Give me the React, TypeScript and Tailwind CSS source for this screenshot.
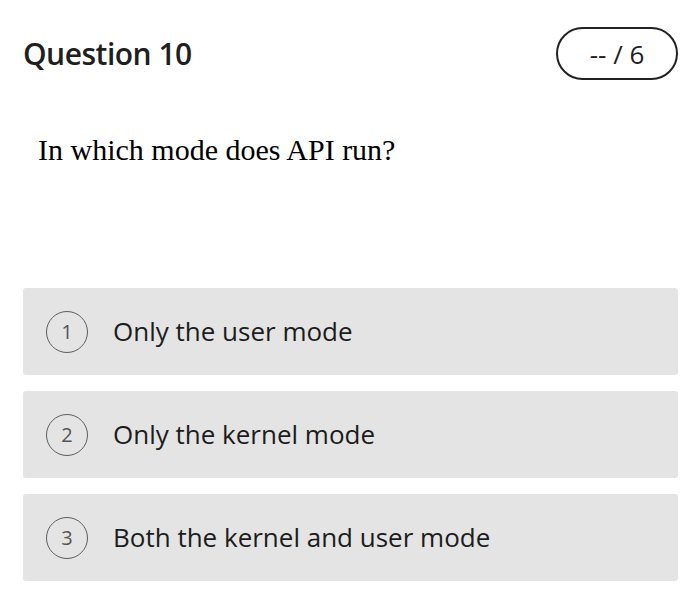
const options = [
  "Only the user mode",
  "Only the kernel mode",
  "Both the kernel and user mode",
];

export default function App() {
  return (
    <div className="w-[700px] h-[593px] bg-white font-['Open_Sans',sans-serif] text-[#1f1f1f]">
      <div className="flex items-center justify-between pl-[23px] pr-[22px] pt-[27px]">
        <h1 className="text-[30px] font-semibold leading-none tracking-[-0.5px]">Question 10</h1>
        <div className="flex h-[53px] w-[122px] items-center justify-center rounded-full border-2 border-[#222]">
          <span className="text-[26px] leading-none">-- / 6</span>
        </div>
      </div>

      <p className="mt-[55px] pl-[38px] font-['Liberation_Serif',serif] text-[30px] leading-none text-black">
        In which mode does API run?
      </p>

      <div className="mt-[123px] flex flex-col gap-[16px] pl-[23px] pr-[22px]">
        {options.map((opt, i) => (
          <div
            key={opt}
            className="flex h-[87px] items-center rounded-[3px] bg-[#e4e4e4] pl-[23px]"
          >
            <div className="flex h-[42px] w-[42px] items-center justify-center rounded-full border-[1.5px] border-[#5e5e5e] text-[20px] text-[#555]">
              {i + 1}
            </div>
            <span className="ml-[25px] text-[26px] text-[#1c1c1c]">{opt}</span>
          </div>
        ))}
      </div>
    </div>
  );
}
